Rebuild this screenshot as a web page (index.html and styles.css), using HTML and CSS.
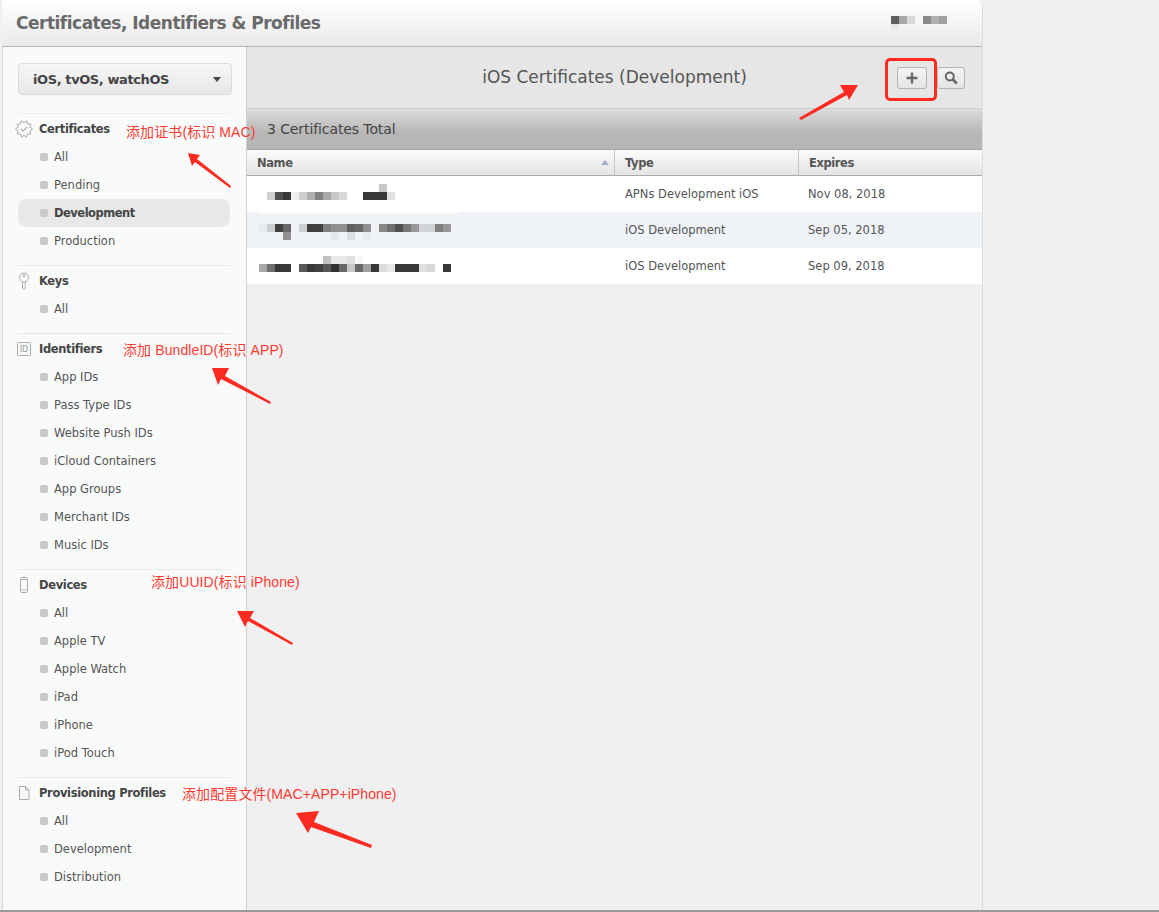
FILE: index.html
```html
<!DOCTYPE html>
<html lang="en">
<head>
<meta charset="utf-8">
<title>Certificates, Identifiers &amp; Profiles</title>
<link rel="stylesheet" href="styles.css">
</head>
<body>
<div class="window">
  <header class="topbar">
    <h1 class="brand">Certificates, Identifiers &amp; Profiles</h1>
    <svg class="user" width="60" height="14" viewBox="891 16 60 14">
      <rect x="891" y="16" width="8" height="8" fill="#606060"/><rect x="899" y="16" width="8" height="8" fill="#a8a8a8"/><rect x="907" y="16" width="8" height="8" fill="#d8d8d8"/><rect x="891" y="24" width="8" height="5" fill="#e8e8e8"/>
      <rect x="923" y="16" width="8" height="8" fill="#888"/><rect x="931" y="16" width="8" height="8" fill="#b0b0b0"/><rect x="939" y="16" width="8" height="8" fill="#a0a0a0"/>
    </svg>
  </header>
  <div class="layout">
    <nav class="sidebar">
      <div class="select"><span>iOS, tvOS, watchOS</span><i class="caret"></i></div>
      <section class="group first">
        <h2 class="group-title">
          <svg class="gicon" width="18" height="18" viewBox="0 0 18 18"><polygon points="17.500,9 14.900,11 15.800,13.900 12.700,14.100 11.600,17.100 9,15.400 6.400,17.100 5.300,14.100 2.200,13.900 3.100,11 .5,9 3.100,7 2.200,4.100 5.300,3.900 6.400,.9 9,2.600 11.600,.9 12.700,3.900 15.800,4.100 14.900,7" fill="none" stroke="#a0a0a0" stroke-width=".9"/><path d="M5.800 9l2.200 2.200 4.200-4.200" fill="none" stroke="#888"/></svg>
          Certificates</h2>
        <a class="item">All</a>
        <a class="item">Pending</a>
        <a class="item active">Development</a>
        <a class="item">Production</a>
      </section>
      <section class="group">
        <h2 class="group-title">
          <svg class="gicon" width="18" height="18" viewBox="0 0 18 18"><circle cx="9" cy="5.500" r="4.500" fill="none" stroke="#aaa"/><circle cx="9" cy="3.500" r="1.200" fill="none" stroke="#aaa"/><path d="M7.500 10v6l1.500 1.500 1.500-1.500v-1l-.8-.7.800-.8v-1l-.8-.7.800-.6V10" fill="none" stroke="#aaa"/></svg>
          Keys</h2>
        <a class="item">All</a>
      </section>
      <section class="group">
        <h2 class="group-title">
          <svg class="gicon" width="18" height="18" viewBox="0 0 18 18"><rect x="2.500" y="2.500" width="13" height="13" rx="1" fill="none" stroke="#aaa"/><text x="9" y="12" class="id-mark">ID</text></svg>
          Identifiers</h2>
        <a class="item">App IDs</a>
        <a class="item">Pass Type IDs</a>
        <a class="item">Website Push IDs</a>
        <a class="item">iCloud Containers</a>
        <a class="item">App Groups</a>
        <a class="item">Merchant IDs</a>
        <a class="item">Music IDs</a>
      </section>
      <section class="group">
        <h2 class="group-title">
          <svg class="gicon" width="18" height="18" viewBox="0 0 18 18"><rect x="5.500" y="1.500" width="7" height="15" rx="1" fill="none" stroke="#aaa"/><path d="M5.500 3.500h7M5.500 14h7" stroke="#bbb" fill="none"/></svg>
          Devices</h2>
        <a class="item">All</a>
        <a class="item">Apple TV</a>
        <a class="item">Apple Watch</a>
        <a class="item">iPad</a>
        <a class="item">iPhone</a>
        <a class="item">iPod Touch</a>
      </section>
      <section class="group">
        <h2 class="group-title">
          <svg class="gicon" width="18" height="18" viewBox="0 0 18 18"><path d="M4.500 2.500h6l3.500 3.500v9.500h-9.500zM10.500 2.500v3.500h3.500" fill="none" stroke="#aaa"/></svg>
          Provisioning Profiles</h2>
        <a class="item">All</a>
        <a class="item">Development</a>
        <a class="item">Distribution</a>
      </section>
    </nav>
    <main class="content">
      <div class="titlebar">
        <h2 class="page-title">iOS Certificates (Development)</h2>
        <div class="tools">
          <button class="tool tool-add"><svg width="14" height="14" viewBox="0 0 14 14"><path d="M7 1.500v11M1.500 7h11" stroke="#666" stroke-width="2.400" fill="none"/></svg></button>
          <button class="tool tool-search"><svg width="16" height="16" viewBox="0 0 16 16"><circle cx="6.800" cy="6.500" r="4" fill="none" stroke="#666" stroke-width="2"/><path d="M9.800 9.500l4 4" stroke="#666" stroke-width="2.600" fill="none"/></svg></button>
        </div>
      </div>
      <div class="totalbar">3 Certificates Total</div>
      <div class="table">
        <div class="th th-name">Name<i class="sort"></i></div>
        <div class="th">Type</div>
        <div class="th th-last">Expires</div>

        <div class="td td-name">
          <svg class="blur" width="200" height="36" viewBox="259 176 200 36">
            <rect x="267" y="192" width="8" height="8" fill="#d0d0d0"/><rect x="275" y="192" width="8" height="8" fill="#505050"/><rect x="283" y="192" width="8" height="8" fill="#383838"/><rect x="291" y="192" width="8" height="8" fill="#eee"/><rect x="299" y="192" width="8" height="8" fill="#d0d0d0"/><rect x="307" y="192" width="8" height="8" fill="#b0b0b0"/><rect x="315" y="192" width="8" height="8" fill="#808080"/><rect x="323" y="192" width="8" height="8" fill="#a8a8a8"/><rect x="331" y="192" width="8" height="8" fill="#c8c8c8"/><rect x="339" y="192" width="8" height="8" fill="#d8d8d8"/><rect x="363" y="192" width="24" height="8" fill="#383838"/><rect x="387" y="192" width="8" height="8" fill="#e0e0e0"/><rect x="379" y="184" width="8" height="8" fill="#c8c8c8"/>
          </svg>
        </div>
        <div class="td">APNs Development iOS</div>
        <div class="td td-date">Nov 08, 2018</div>

        <div class="td td-name alt">
          <svg class="blur" width="200" height="36" viewBox="259 212 200 36">
            <rect x="259" y="212" width="200" height="2" fill="#fff" fill-opacity=".7"/>
            <rect x="259" y="224" width="8" height="8" fill="#e8eaee"/><rect x="267" y="224" width="8" height="8" fill="#cbced3"/><rect x="275" y="224" width="8" height="8" fill="#404040"/><rect x="283" y="224" width="8" height="8" fill="#686868"/><rect x="299" y="224" width="8" height="8" fill="#cbced3"/><rect x="307" y="224" width="16" height="8" fill="#404040"/><rect x="323" y="224" width="8" height="8" fill="#808080"/><rect x="331" y="224" width="16" height="8" fill="#909090"/><rect x="347" y="224" width="8" height="8" fill="#606060"/><rect x="355" y="224" width="8" height="8" fill="#686868"/><rect x="363" y="224" width="8" height="8" fill="#909090"/><rect x="379" y="224" width="8" height="8" fill="#888"/><rect x="387" y="224" width="8" height="8" fill="#707070"/><rect x="395" y="224" width="8" height="8" fill="#505050"/><rect x="403" y="224" width="8" height="8" fill="#787878"/><rect x="411" y="224" width="8" height="8" fill="#989898"/><rect x="419" y="224" width="16" height="8" fill="#d0d3d8"/><rect x="435" y="224" width="8" height="8" fill="#808080"/><rect x="443" y="224" width="8" height="8" fill="#989898"/><rect x="283" y="232" width="8" height="8" fill="#909090"/><rect x="331" y="232" width="8" height="8" fill="#e6e8ec"/><rect x="347" y="232" width="8" height="8" fill="#dcdee2"/><rect x="363" y="232" width="8" height="8" fill="#eaecf0"/>
          </svg>
        </div>
        <div class="td alt">iOS Development</div>
        <div class="td td-date alt">Sep 05, 2018</div>

        <div class="td td-name">
          <svg class="blur" width="200" height="36" viewBox="259 248 200 36">
            <rect x="323" y="256" width="8" height="8" fill="#c0c0c0"/><rect x="331" y="256" width="16" height="8" fill="#e8e8e8"/><rect x="347" y="256" width="8" height="8" fill="#e0e0e0"/><rect x="355" y="256" width="8" height="8" fill="#f8f8f8"/><rect x="259" y="264" width="8" height="8" fill="#a8a8a8"/><rect x="267" y="264" width="8" height="8" fill="#707070"/><rect x="275" y="264" width="16" height="8" fill="#383838"/><rect x="299" y="264" width="8" height="8" fill="#585858"/><rect x="307" y="264" width="8" height="8" fill="#383838"/><rect x="315" y="264" width="8" height="8" fill="#404040"/><rect x="323" y="264" width="8" height="8" fill="#585858"/><rect x="331" y="264" width="8" height="8" fill="#303030"/><rect x="339" y="264" width="8" height="8" fill="#686868"/><rect x="347" y="264" width="8" height="8" fill="#c8c8c8"/><rect x="355" y="264" width="8" height="8" fill="#686868"/><rect x="363" y="264" width="8" height="8" fill="#a0a0a0"/><rect x="371" y="264" width="8" height="8" fill="#383838"/><rect x="379" y="264" width="8" height="8" fill="#ddd"/><rect x="387" y="264" width="8" height="8" fill="#e8e8e8"/><rect x="395" y="264" width="24" height="8" fill="#383838"/><rect x="419" y="264" width="8" height="8" fill="#e0e0e0"/><rect x="427" y="264" width="8" height="8" fill="#d8d8d8"/><rect x="443" y="264" width="8" height="8" fill="#383838"/>
          </svg>
        </div>
        <div class="td">iOS Development</div>
        <div class="td td-date">Sep 09, 2018</div>
      </div>
    </main>
  </div>
</div>

<div class="marks">
  <svg class="arrows" width="1159" height="912" viewBox="0 0 1159 912">
    <g fill="#fc2a20">
      <polygon points="188,153 200,155 197,159 231,186 230,188 195,162 192,166"/>
      <polygon points="212,368 229,368 225,376 271,402 270,404 221,379 218,385"/>
      <polygon points="237,611 254,611 250,618 293,643 292,645 248,621 245,627"/>
      <polygon points="296,813 319,811 314,822 372,845 371,848 311,827 308,833"/>
      <polygon points="858,85 840,85 844,92 799,118 801,120 847,95 849,100"/>
    </g>
    <rect x="341" y="910" width="4" height="2" fill="#1a4a7a"/>
    <rect x="381" y="910" width="5" height="2" fill="#a89a70"/>
    <rect x="393" y="910" width="4" height="2" fill="#1a4a7a"/>
    <rect x="998" y="910" width="11" height="2" fill="#808080"/>
  </svg>
  <div class="frame"></div>
  <span class="note n1">添加证书(标识 MAC)</span>
  <span class="note n2">添加 BundleID(标识 APP)</span>
  <span class="note n3">添加UUID(标识 iPhone)</span>
  <span class="note n4">添加配置文件(MAC+APP+iPhone)</span>
</div>
</body>
</html>
```
FILE: styles.css
```css
* { box-sizing: border-box; }
html, body { margin: 0; height: 100%; }
body {
  background: #f0f0f0;
  font-family: "DejaVu Sans", "Noto Sans", sans-serif;
  color: #444;
  height: 912px;
  overflow: hidden;
  position: relative;
  border-bottom: 2px solid #9a9a9a;
}
.window {
  width: 981px;
  margin-left: 2px;
  height: 910px;
  display: flex;
  flex-direction: column;
  border-right: 1px solid #dcdcdc;
  border-top-right-radius: 6px;
  overflow: hidden;
}
.topbar {
  height: 47px;
  flex: none;
  background: linear-gradient(#fff, #e9e9e9);
  border-bottom: 1px solid #b4b4b4;
  display: flex;
  align-items: center;
  justify-content: space-between;
  padding: 0 31px 0 14px;
}
.brand { margin: 0; font-size: 17px; font-weight: bold; color: #6a6a6a; letter-spacing: -.5px; }
.user { flex: none; align-self: flex-start; margin-top: 16px; }
.layout { flex: 1; display: flex; min-height: 0; }
.sidebar {
  width: 245px;
  flex: none;
  background: #f9fbfb;
  border-right: 1px solid #d0d0d0;
  border-left: 1px solid #d8d8d8;
  padding: 16px 15px 0 15px;
  font-size: 11.5px;
}
.select {
  height: 32px;
  width: 214px;
  border: 1px solid #dcdcdc;
  border-radius: 4px;
  background: linear-gradient(#f7f7f7, #e7e7e7);
  display: flex;
  align-items: center;
  justify-content: space-between;
  padding: 0 10px 0 14px;
  font-size: 13px;
  letter-spacing: -.4px;
  font-weight: bold;
  color: #444;
}
.caret { width: 0; height: 0; border: 4.500px solid transparent; border-top: 5px solid #444; border-bottom: 0; }
.group {
  width: 212px;
  border-top: 1px solid #e6e8e8;
  padding-bottom: 10px;
}
.group.first { margin-top: 18px; border-top-color: #eceeee; }
.group-title {
  margin: 0 0 0 -3px;
  height: 29px;
  padding-top: 1px;
  display: flex;
  align-items: center;
  gap: 6px;
  font-size: 11.5px;
  letter-spacing: -.35px;
  font-weight: bold;
  color: #444;
}
.gicon { flex: none; }
.id-mark { font-size: 8px; fill: #999; text-anchor: middle; font-weight: normal; letter-spacing: 0; }
.item {
  display: flex;
  align-items: center;
  height: 28px;
  padding-left: 36px;
  color: #555;
  position: relative;
  border-radius: 8px;
  font-size: 11.500px;
}
.item::before {
  content: "";
  position: absolute;
  left: 22px;
  top: 10px;
  width: 8px;
  height: 8px;
  border-radius: 2px;
  background: #c8c8c8;
}
.item.active { background: #e8e8e8; font-weight: bold; letter-spacing: -.5px; color: #444; }
.content { flex: 1; background: #f0f0f0; min-width: 0; }
.titlebar {
  height: 62px;
  background: #e6e6e6;
  border-bottom: 1px solid #cfcfcf;
  display: flex;
  align-items: center;
  justify-content: center;
  position: relative;
}
.page-title { margin: 0 0 2px; font-size: 17px; font-weight: normal; color: #555; }
.tools {
  position: absolute;
  left: 650px;
  top: 20px;
  display: flex;
  gap: 10px;
}
.tool {
  height: 22px;
  padding: 0;
  border: 1px solid #b4b4b4;
  border-radius: 3px;
  background: linear-gradient(#f4f4f4, #e4e4e4);
  display: flex;
  align-items: center;
  justify-content: center;
}
.tool-add { width: 30px; }
.tool-search { width: 28px; }
.totalbar {
  height: 41px;
  background: linear-gradient(#dcdcdc, #b6b6b6 60%);
  border-bottom: 1px solid #a6a6a6;
  display: flex;
  align-items: center;
  padding-left: 20px;
  font-size: 14px;
  letter-spacing: -.1px;
  color: #444;
}
.table {
  display: grid;
  grid-template-columns: 368px 184px 183px;
  grid-auto-rows: 36px;
  grid-template-rows: 26px;
  font-size: 11.500px;
}
.th {
  display: flex;
  align-items: center;
  padding: 1px 0 0 10px;
  background: linear-gradient(#fbfbfb, #e4e4e4);
  border-bottom: 1px solid #aaa;
  border-right: 1px solid #c4c4c4;
  letter-spacing: -.4px;
  font-weight: bold;
  color: #555;
  position: relative;
}
.th-last { border-right: 0; }
.sort {
  position: absolute;
  right: 5px;
  top: 10px;
  width: 0;
  height: 0;
  border: 4px solid transparent;
  border-top: 0;
  border-bottom: 5px solid #9fb0c4;
}
.td {
  display: flex;
  align-items: center;
  padding-left: 10px;
  background: #fff;
  color: #555;
}
.td.alt { background: #eff2f7; }
.td-name { padding-left: 12px; }
.td-date { padding-left: 9px; }
.blur { display: block; flex: none; }
.marks { position: absolute; inset: 0; pointer-events: none; }
.arrows { position: absolute; left: 0; top: 0; }
.frame {
  position: absolute;
  left: 885px;
  top: 58px;
  width: 52px;
  height: 43px;
  border: 3px solid #fc2a20;
  border-radius: 5px;
}
.note {
  position: absolute;
  font-family: "Liberation Sans", "Noto Sans CJK SC", sans-serif;
  font-size: 14px;
  letter-spacing: .1px;
  line-height: 16px;
  color: #fc3a30;
  white-space: nowrap;
}
.n1 { left: 126px; top: 124px; }
.n2 { left: 123px; top: 342px; }
.n3 { left: 151px; top: 574px; }
.n4 { left: 182px; top: 786px; }
```
